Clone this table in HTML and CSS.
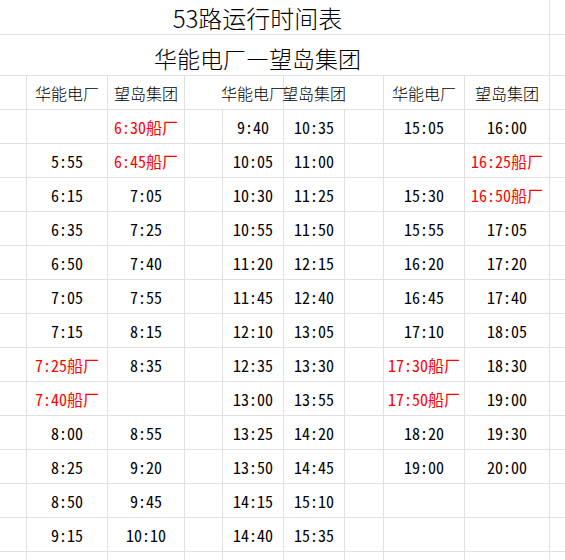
FILE: index.html
```html
<!DOCTYPE html>
<html lang="zh">
<head>
<meta charset="utf-8">
<title>53路运行时间表</title>
<link rel="stylesheet" href="styles.css">
</head>
<body>
<div class="sheet">
  <div class="c title">53路运行时间表</div><div class="c"></div>
  <div class="c subtitle">华能电厂—望岛集团</div><div class="c"></div>

  <div class="c"></div><div class="c hd">华能电厂</div><div class="c hd">望岛集团</div>
  <div class="c hd pair-a"><span>华能电厂</span></div><div class="c hd pair-b"><span>望岛集团</span></div>
  <div class="c hd">华能电厂</div><div class="c hd">望岛集团</div><div class="c"></div>

  <div class="c"></div><div class="c t"></div><div class="c t red">6:30船厂</div><div class="c"></div><div class="c t">9:40</div><div class="c t">10:35</div><div class="c"></div><div class="c t">15:05</div><div class="c t">16:00</div><div class="c"></div>
  <div class="c"></div><div class="c t">5:55</div><div class="c t red">6:45船厂</div><div class="c"></div><div class="c t">10:05</div><div class="c t">11:00</div><div class="c"></div><div class="c t"></div><div class="c t red">16:25船厂</div><div class="c"></div>
  <div class="c"></div><div class="c t">6:15</div><div class="c t">7:05</div><div class="c"></div><div class="c t">10:30</div><div class="c t">11:25</div><div class="c"></div><div class="c t">15:30</div><div class="c t red">16:50船厂</div><div class="c"></div>
  <div class="c"></div><div class="c t">6:35</div><div class="c t">7:25</div><div class="c"></div><div class="c t">10:55</div><div class="c t">11:50</div><div class="c"></div><div class="c t">15:55</div><div class="c t">17:05</div><div class="c"></div>
  <div class="c"></div><div class="c t">6:50</div><div class="c t">7:40</div><div class="c"></div><div class="c t">11:20</div><div class="c t">12:15</div><div class="c"></div><div class="c t">16:20</div><div class="c t">17:20</div><div class="c"></div>
  <div class="c"></div><div class="c t">7:05</div><div class="c t">7:55</div><div class="c"></div><div class="c t">11:45</div><div class="c t">12:40</div><div class="c"></div><div class="c t">16:45</div><div class="c t">17:40</div><div class="c"></div>
  <div class="c"></div><div class="c t">7:15</div><div class="c t">8:15</div><div class="c"></div><div class="c t">12:10</div><div class="c t">13:05</div><div class="c"></div><div class="c t">17:10</div><div class="c t">18:05</div><div class="c"></div>
  <div class="c"></div><div class="c t red">7:25船厂</div><div class="c t">8:35</div><div class="c"></div><div class="c t">12:35</div><div class="c t">13:30</div><div class="c"></div><div class="c t red">17:30船厂</div><div class="c t">18:30</div><div class="c"></div>
  <div class="c"></div><div class="c t red">7:40船厂</div><div class="c t"></div><div class="c"></div><div class="c t">13:00</div><div class="c t">13:55</div><div class="c"></div><div class="c t red">17:50船厂</div><div class="c t">19:00</div><div class="c"></div>
  <div class="c"></div><div class="c t">8:00</div><div class="c t">8:55</div><div class="c"></div><div class="c t">13:25</div><div class="c t">14:20</div><div class="c"></div><div class="c t">18:20</div><div class="c t">19:30</div><div class="c"></div>
  <div class="c"></div><div class="c t">8:25</div><div class="c t">9:20</div><div class="c"></div><div class="c t">13:50</div><div class="c t">14:45</div><div class="c"></div><div class="c t">19:00</div><div class="c t">20:00</div><div class="c"></div>
  <div class="c"></div><div class="c t">8:50</div><div class="c t">9:45</div><div class="c"></div><div class="c t">14:15</div><div class="c t">15:10</div><div class="c"></div><div class="c t"></div><div class="c t"></div><div class="c"></div>
  <div class="c"></div><div class="c t">9:15</div><div class="c t">10:10</div><div class="c"></div><div class="c t">14:40</div><div class="c t">15:35</div><div class="c"></div><div class="c t"></div><div class="c t"></div><div class="c"></div>
  <div class="c"></div><div class="c"></div><div class="c"></div><div class="c"></div><div class="c"></div><div class="c"></div><div class="c"></div><div class="c"></div><div class="c"></div><div class="c"></div>
</div>
</body>
</html>
```
FILE: styles.css
```css
html, body {
  margin: 0;
  padding: 0;
  background: #ffffff;
  overflow: hidden;
}

.sheet {
  display: grid;
  grid-template-columns: 26px 80px 76px 37px 60px 60px 38px 80px 84px 1fr;
  grid-template-rows: 34px 40px 33px repeat(13, 33px) 8px;
  gap: 1px;
  background: #e0e0e0;
  width: 565px;
  height: 560px;
  font-family: "Noto Sans CJK SC", sans-serif;
  font-weight: 300;
  color: #000;
}

.c {
  background: #ffffff;
  display: flex;
  align-items: center;
  justify-content: center;
  white-space: nowrap;
  min-width: 0;
}

.title {
  grid-column: 1 / span 9;
  font-size: 24px;
  padding-right: 34px;
  padding-top: 0;
}

.subtitle {
  grid-column: 1 / span 9;
  font-size: 23px;
  padding-right: 34px;
  padding-top: 5px;
}

.hd {
  font-size: 16px;
  padding-top: 1px;
}

.pair-a {
  grid-column: span 2;
  padding-left: 38px;
}

.pair-b {
  grid-column: span 2;
  padding-right: 39px;
}

.t {
  font-family: "Noto Sans Mono CJK SC", "Noto Sans CJK SC", monospace;
  font-size: 16px;
  padding-top: 1px;
}

.red {
  color: #ff0000;
}
```
